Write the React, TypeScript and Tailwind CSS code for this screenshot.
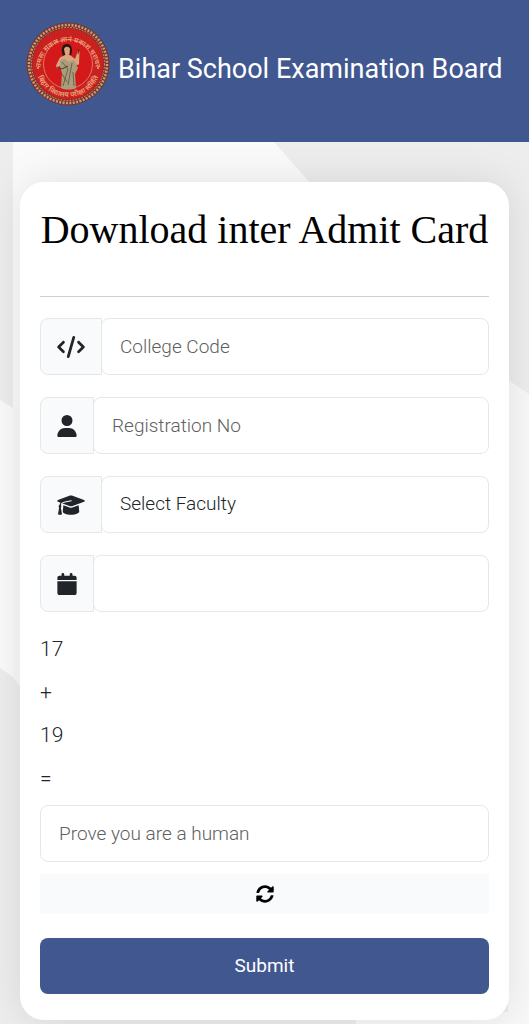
import { useState } from 'react';
import type { ReactNode } from 'react';
import { FaSyncAlt } from 'react-icons/fa';
import { FaCalendar, FaCode, FaUser } from 'react-icons/fa6';

interface FieldRowProps {
  id: string;
  label: string;
  icon: ReactNode;
  children: ReactNode;
}

const controlClass =
  'h-[57px] w-full min-w-0 flex-1 rounded-lg border border-[#e4e8ea] bg-white px-[18px] text-[19px] font-light text-[#212529] outline-none placeholder:text-[#606060] focus:border-[#41578f]';

function FieldRow({ id, label, icon, children }: FieldRowProps) {
  return (
    <div className="flex rounded-lg">
      <label
        htmlFor={id}
        aria-label={label}
        className="-mr-px flex items-center rounded-l-lg border border-[#e4e8ea] bg-[#f8fafb] px-4 text-[22px] text-[#212529]"
      >
        {icon}
      </label>
      {children}
    </div>
  );
}

function GraduationCap() {
  return (
    <svg viewBox="0 0 640 512" className="h-[22px] w-7" fill="currentColor" aria-hidden="true">
      <path d="M623.1 136.900l-282.700-101.200c-13.730-4.910-28.700-4.910-42.430 0L16.050 136.900C6.438 140.400 0 149.600 0 160s6.438 19.650 16.050 23.090L76.070 204.600c-11.890 15.800-20.260 34.160-24.550 53.950C40.050 263.400 32 274.800 32 288c0 9.953 4.814 18.490 11.940 24.330l-24.830 149.100C17.480 471.100 25 480 34.890 480H93.110c9.887 0 17.410-8.879 15.780-18.630l-24.830-149.100C91.190 306.500 96 297.100 96 288c0-10.290-5.174-19.030-12.720-24.890c4.252-17.760 12.880-33.820 24.940-47.030l190.600 68.230c13.730 4.910 28.700 4.910 42.430 0l282.700-101.200C633.600 179.600 640 170.400 640 160S633.600 140.400 623.100 136.900zM351.100 314.400C341.700 318.500 330.900 320 320 320c-10.920 0-21.690-1.867-32-5.555L142.800 262.500L128 405.300C128 446.600 213.100 480 320 480c105.100 0 192-33.400 192-74.670l-14.780-142.900L351.100 314.400z" />
      <path d="M325 158L180 184C145 190 120 202 103 222" fill="none" stroke="#f8fafb" strokeWidth="24" strokeLinecap="round" />
    </svg>
  );
}

function BoardLogo() {
  return (
    <svg viewBox="0 0 84 84" className="size-[84px] shrink-0" role="img" aria-label="Board logo">
      <defs>
        <path id="ringTop" d="M 14.500 47 A 27.500 27.500 0 1 1 69.500 47" />
        <path id="ringBottom" d="M 9 42 A 33 33 0 0 0 75 42" />
      </defs>
      <circle cx="42" cy="42" r="41.5" fill="#743630" />
      <circle cx="42" cy="42" r="39" fill="none" stroke="#cf9a70" strokeWidth="2.6" strokeDasharray="2 1.4" />
      <circle cx="42" cy="42" r="36.5" fill="#8c2c22" stroke="#d9a070" strokeWidth="1" strokeDasharray="1.6 1.4" />
      <circle cx="42" cy="42" r="35.5" fill="#c92020" />
      <circle cx="42" cy="42" r="24.5" fill="#d4191b" stroke="#e58f70" strokeWidth="0.8" />
      <g fill="#eda57c" fontSize="7" fontWeight="600" fontFamily="'Noto Sans Devanagari', 'Noto Sans', sans-serif">
        <text textAnchor="middle">
          <textPath href="#ringTop" startOffset="50%">तमसः सकल ज्ञानं प्रकाश चराचर</textPath>
        </text>
        <text textAnchor="middle">
          <textPath href="#ringBottom" startOffset="50%">बिहार विद्यालय परीक्षा समिति</textPath>
        </text>
      </g>
      <circle cx="12" cy="46" r="1" fill="#eda57c" />
      <circle cx="72" cy="46" r="1" fill="#eda57c" />
      {/* figure */}
      <path d="M36 31c-1-6 1-9 5-9 4 0 5 3 5 7l-1 5-7 2z" fill="#2a1712" />
      <path d="M38 27c1-3 5-3 6 0l-.5 5-1.500 2h-2l-1-2z" fill="#dba37b" />
      <path d="M39 33l5 0 5 4 3-8 1.500.5-.5 13-5 1-1 5H36l-1-6-4 4-1-3 4-8z" fill="#d9a680" />
      <path d="M34 38l5-1 4 3 5-2 4 8-3 6 1 14c-4 2-11 2-15 0l1-15-2-6z" fill="#aa9d7b" />
      <path d="M36 40l6 7-5 17M46 41l-4 22M36 52l5 8M47 50l1 14" fill="none" stroke="#575440" strokeWidth="0.8" />
      <path d="M52 32l1-5M31 45l5 2 6-3" fill="none" stroke="#4c2e20" strokeWidth="0.9" />
    </svg>
  );
}

function Backdrop() {
  return (
    <svg
      className="absolute inset-0 -z-10 size-full"
      viewBox="0 0 529 882"
      preserveAspectRatio="none"
      aria-hidden="true"
    >
      <rect width="529" height="882" fill="#ededed" />
      <path d="M13 0H274L325 58V110H24V266H13z" fill="#fafafa" />
      <path d="M508 238L529 252V882H356V870H508z" fill="#f8f8f8" />
      <path d="M0 258L13 266V535L0 526z" fill="#fafafa" />
      <path d="M13 266H24V545H20L13 535z" fill="#f8f8f8" />
    </svg>
  );
}

export default function App() {
  const [numbers, setNumbers] = useState([17, 19]);

  const refreshCaptcha = () => {
    setNumbers([Math.floor(Math.random() * 20) + 1, Math.floor(Math.random() * 20) + 1]);
  };

  return (
    <div className="flex min-h-screen flex-col font-[Roboto,sans-serif] text-[#212529]">
      <header className="flex h-[142px] items-start gap-2 bg-[#41578f] pt-[22px] pr-5 pl-[26px]">
        <BoardLogo />
        <h2 className="flex h-[94px] items-center text-[27px] leading-8 whitespace-nowrap text-white">
          Bihar School Examination Board
        </h2>
      </header>

      <main className="relative isolate flex-1 px-5 pt-10 pb-1">
        <Backdrop />
        <form
          className="rounded-[24px] bg-white px-5 pb-[26px] shadow-[0_0_40px_rgba(0,0,0,0.10)]"
          onSubmit={(e) => e.preventDefault()}
        >
          <h1 className="-mx-2 flex h-[114px] items-start justify-center pt-5 font-['Liberation_Serif',serif] text-[40px] leading-14 whitespace-nowrap text-black">
            Download inter Admit Card
          </h1>
          <hr className="mb-[21px] border-[#cfd1d2]" />

          <div className="flex flex-col gap-[22px]">
            <FieldRow id="college" label="College Code" icon={<FaCode className="h-[22px] w-7" />}>
              <input id="college" type="text" placeholder="College Code" className={controlClass} />
            </FieldRow>
            <FieldRow id="registration" label="Registration No" icon={<FaUser className="h-[22px] w-5" />}>
              <input id="registration" type="text" placeholder="Registration No" className={controlClass} />
            </FieldRow>
            <FieldRow id="faculty" label="Faculty" icon={<GraduationCap />}>
              <select id="faculty" className={`${controlClass} appearance-none`}>
                <option>Select Faculty</option>
                <option>Arts</option>
                <option>Science</option>
                <option>Commerce</option>
              </select>
            </FieldRow>
            <FieldRow id="dob" label="Date of Birth" icon={<FaCalendar className="h-[22px] w-5" />}>
              <input id="dob" type="text" className={controlClass} />
            </FieldRow>
          </div>

          <div className="mt-[22px] mb-3 flex flex-col gap-[13px] text-[21px] leading-[30px] font-light">
            <p>{numbers[0]}</p>
            <p>+</p>
            <p>{numbers[1]}</p>
            <p>=</p>
          </div>

          <input
            id="captcha"
            type="text"
            aria-label="Prove you are a human"
            placeholder="Prove you are a human"
            className={controlClass}
          />
          <button
            type="button"
            aria-label="Refresh"
            onClick={refreshCaptcha}
            className="mt-3 flex h-10 w-full items-center justify-center bg-[#f8fafb] text-black"
          >
            <FaSyncAlt className="size-[18px]" />
          </button>
          <button
            type="submit"
            className="mt-6 h-14 w-full rounded-lg bg-[#41578f] text-[19px] text-white hover:bg-[#364a7c]"
          >
            Submit
          </button>
        </form>
      </main>
    </div>
  );
}
